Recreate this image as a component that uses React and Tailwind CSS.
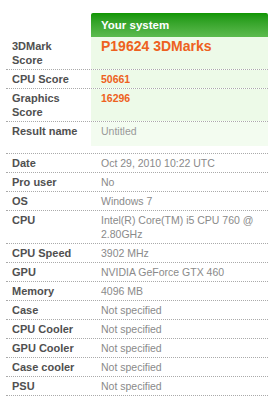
import React from 'react';

const SCORE_ROWS = [
    { label: '3DMark Score', value: 'P19624 3DMarks', kind: 'big' },
    { label: 'CPU Score', value: '50661', kind: 'score' },
    { label: 'Graphics Score', value: '16296', kind: 'score' },
];

const SYSTEM_ROWS = [
    ['Date', 'Oct 29, 2010 10:22 UTC'],
    ['Pro user', 'No'],
    ['OS', 'Windows 7'],
    ['CPU', 'Intel(R) Core(TM) i5 CPU 760 @ 2.80GHz'],
    ['CPU Speed', '3902 MHz'],
    ['GPU', 'NVIDIA GeForce GTX 460'],
    ['Memory', '4096 MB'],
    ['Case', 'Not specified'],
    ['CPU Cooler', 'Not specified'],
    ['GPU Cooler', 'Not specified'],
    ['Case cooler', 'Not specified'],
    ['PSU', 'Not specified'],
];

const Label = ({ children }) => (
    <div className="w-[85px] shrink-0 pl-[6px] pr-[9px] py-[2px] text-[11px] font-bold text-[#505050]">
        {children}
    </div>
);

export default function App() {
    return (
        <div className="w-[276px] h-[400px] bg-white pt-[13px] pl-[6px] text-[10.5px] leading-[14px] font-['Liberation_Sans',Arial,sans-serif]">
            <div className="w-[262px]">
                {/* header */}
                <div className="flex">
                    <div className="w-[85px] shrink-0" />
                    <div className="flex-1 h-[24px] rounded-t-[2px] bg-gradient-to-b from-[#0e9600] to-[#5cbb4e] pl-[10px] flex items-center text-[11.5px] font-bold text-white">
                        Your system
                    </div>
                </div>

                {SCORE_ROWS.map(row => (
                    <div key={row.label} className="flex border-b border-dotted border-[#aaa]">
                        <Label>{row.label}</Label>
                        <div className="flex-1 bg-[#edfae8] pl-[10px] py-[2px] font-bold text-[#ee6120]">
                            {row.kind === 'big'
                                ? <span className="text-[14px] leading-[14px]">{row.value}</span>
                                : row.value}
                        </div>
                    </div>
                ))}

                <div className="flex">
                    <Label>Result name</Label>
                    <div className="flex-1 bg-[#f3fcf0] pl-[10px] pt-[2px] pb-[8px] text-[#999]">Untitled</div>
                </div>

                {/* system details */}
                <div className="mt-[7px] border-t border-dotted border-[#aaa]">
                    {SYSTEM_ROWS.map(([label, value]) => (
                        <div key={label} className="flex border-b border-dotted border-[#aaa]">
                            <Label>{label}</Label>
                            <div className="flex-1 pl-[10px] pr-[6px] py-[2px] text-[#8a8a8a]">{value}</div>
                        </div>
                    ))}
                </div>
            </div>
        </div>
    );
}
